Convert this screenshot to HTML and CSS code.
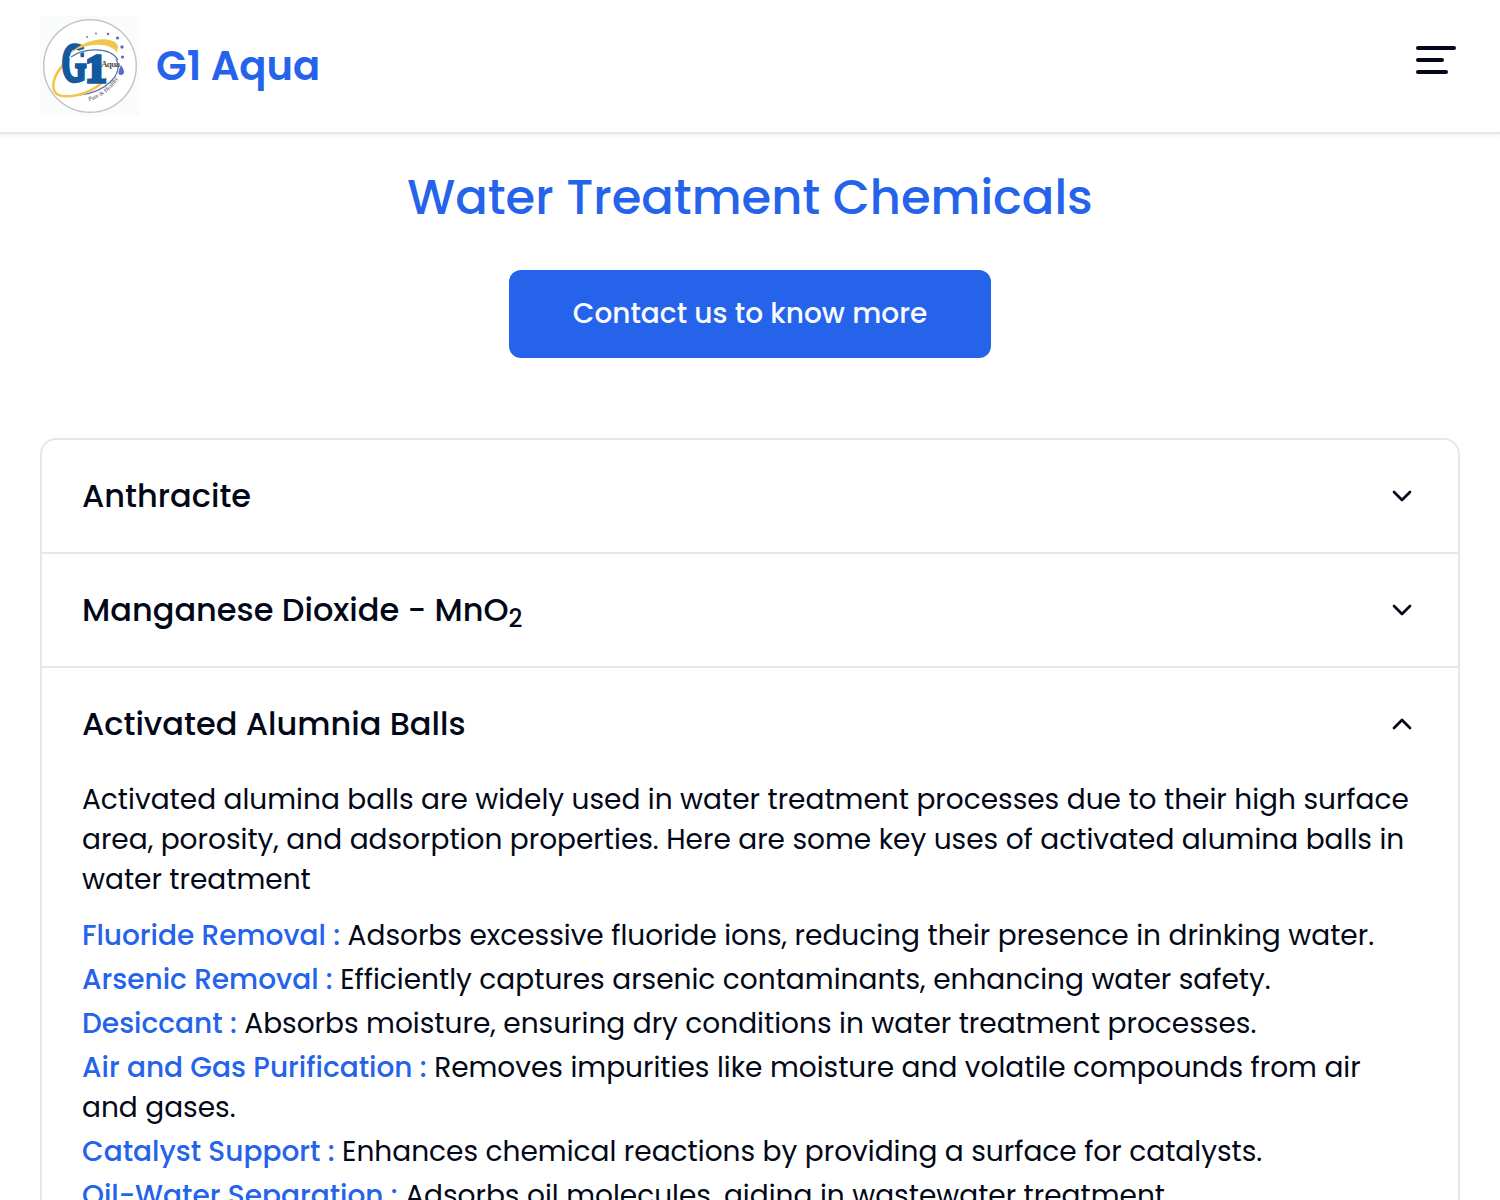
FILE: index.html
```html
<!DOCTYPE html>
<html lang="en">
<head>
<meta charset="utf-8">
<title>G1 Aqua</title>
<link rel="stylesheet" href="styles.css">
</head>
<body>
<header class="header">
  <a class="brand">
    <svg class="logo" viewBox="0 0 100 100">
      <rect width="100" height="100" fill="#fafcfb"/>
      <circle cx="50" cy="50" r="46.3" fill="#fff" stroke="#c4c5c9" stroke-width="1.5"/>
      <path d="M76 43C84 58 66 76 40 79" fill="none" stroke="#5270b2" stroke-width="1.2"/>
      <path d="M24 48C10 63 10 78 22 80C41 82 60 71 66 62" fill="none" stroke="#f3c54b" stroke-width="2.600"/>
      <text class="logo-mark" x="21.500" y="65" font-size="54" textLength="25" lengthAdjust="spacingAndGlyphs">G</text>
      <text class="logo-mark" x="45.500" y="65.500" font-size="39" textLength="21" lengthAdjust="spacingAndGlyphs">1</text>
      <path d="M30 42C42 31 70 28 78 43" fill="none" stroke="#fff" stroke-width="3"/>
      <path d="M31 41C43 32 70 30 78 44" fill="none" stroke="#5270b2" stroke-width="1.200"/>
      <path d="M30 38C42 23 73 18 78 30L77 37C71 26 46 26 30 38Z" fill="#f3c54b"/>
      <text class="logo-name" x="61" y="51" textLength="19">Aqua</text>
      <path id="tagline" d="M49 85Q69 79 79 61" fill="none"/>
      <text class="logo-tag"><textPath href="#tagline">Pure &amp; Healthy</textPath></text>
      <g fill="#526fc4"><circle cx="47" cy="21" r=".9"/><circle cx="56" cy="17.500" r=".9"/><circle cx="68" cy="18" r="1.200"/><circle cx="77.500" cy="22" r="1.600"/><circle cx="82" cy="31" r="1.700"/><circle cx="82.500" cy="41" r="1.600"/><path d="M81 49q-5 10 0 10q6-1 0-10"/></g>
    </svg>
    <span class="brand-name">G1 Aqua</span>
  </a>
  <svg class="menu" viewBox="0 0 40 28"><path d="M2 2H38M2 14H26M2 26H30"/></svg>
</header>
<main class="main">
  <h1 class="title">Water Treatment Chemicals</h1>
  <a class="button">Contact us to know more</a>
  <section class="accordion">
    <div class="item">
      <h2 class="item-head"><span>Anthracite</span><svg class="chevron" viewBox="0 0 24 24"><path d="m6 9 6 6 6-6"/></svg></h2>
    </div>
    <div class="item">
      <h2 class="item-head"><span>Manganese Dioxide - MnO<sub>2</sub></span><svg class="chevron" viewBox="0 0 24 24"><path d="m6 9 6 6 6-6"/></svg></h2>
    </div>
    <div class="item">
      <h2 class="item-head"><span>Activated Alumnia Balls</span><svg class="chevron" viewBox="0 0 24 24"><path d="m6 15 6-6 6 6"/></svg></h2>
      <p class="intro">Activated alumina balls are widely used in water treatment processes due to their high surface area, porosity, and adsorption properties. Here are some key uses of activated alumina balls in water treatment</p>
      <ul class="uses">
        <li><b>Fluoride Removal :</b> Adsorbs excessive fluoride ions, reducing their presence in drinking water.</li>
        <li><b>Arsenic Removal :</b> Efficiently captures arsenic contaminants, enhancing water safety.</li>
        <li><b>Desiccant :</b> Absorbs moisture, ensuring dry conditions in water treatment processes.</li>
        <li><b>Air and Gas Purification :</b> Removes impurities like moisture and volatile compounds from air and gases.</li>
        <li><b>Catalyst Support :</b> Enhances chemical reactions by providing a surface for catalysts.</li>
        <li><b>Oil-Water Separation :</b> Adsorbs oil molecules, aiding in wastewater treatment.</li>
      </ul>
    </div>
  </section>
</main>
</body>
</html>
```
FILE: styles.css
```css
* { box-sizing: border-box; }
body { margin: 0; height: 1200px; overflow: hidden; background: #fff; color: #020817; font-family: Poppins, Inter, sans-serif; font-size: 28px; line-height: 40px; }
.header { display: flex; justify-content: space-between; align-items: flex-start; height: 134px; padding: 16px 40px; border-bottom: 2px solid #e2e8f0; box-shadow: 0 2px 4px rgb(0 0 0 / 5%); }
.brand { display: flex; align-items: center; gap: 16px; }
.logo { width: 100px; height: 100px; }
.logo-mark { font-family: "Liberation Serif", serif; font-weight: bold; fill: #1259a0; stroke: #1259a0; stroke-width: 3.5px; }
.logo-name { font: bold 9px "Liberation Serif", serif; fill: #59534a; }
.logo-tag { font: 6px "Liberation Serif", serif; fill: #444; }
.brand-name { font-size: 40px; font-weight: 600; color: #2563eb; }
.menu { width: 40px; height: 28px; margin: 30px 4px 0 0; fill: none; stroke: #020817; stroke-width: 4; stroke-linecap: round; }
.main { display: flex; flex-direction: column; align-items: center; padding: 32px 40px 0; }
.title { margin: 0; font-size: 48px; line-height: 64px; font-weight: 500; color: #2563eb; }
.button { display: flex; justify-content: center; align-items: center; width: 482px; height: 88px; margin-top: 40px; border-radius: 12px; background: #2563eb; color: #f8fafc; font-weight: 500; }
.accordion { width: 100%; margin-top: 80px; border: 2px solid #e2e8f0; border-radius: 16px; }
.item { padding: 0 40px; }
.item + .item { border-top: 2px solid #e2e8f0; }
.item-head { display: flex; justify-content: space-between; align-items: center; height: 112px; margin: 0; font-size: 32px; font-weight: 500; }
.item-head sub { position: relative; bottom: -6px; vertical-align: baseline; font-size: 24px; line-height: 0; }
.chevron { width: 32px; height: 32px; fill: none; stroke: currentColor; stroke-width: 2; stroke-linecap: round; stroke-linejoin: round; }
.intro { margin: 0 0 16px; }
.uses { display: flex; flex-direction: column; gap: 4px; margin: 0; padding: 0; list-style: none; }
.uses b { font-weight: 500; color: #2563eb; }
```
